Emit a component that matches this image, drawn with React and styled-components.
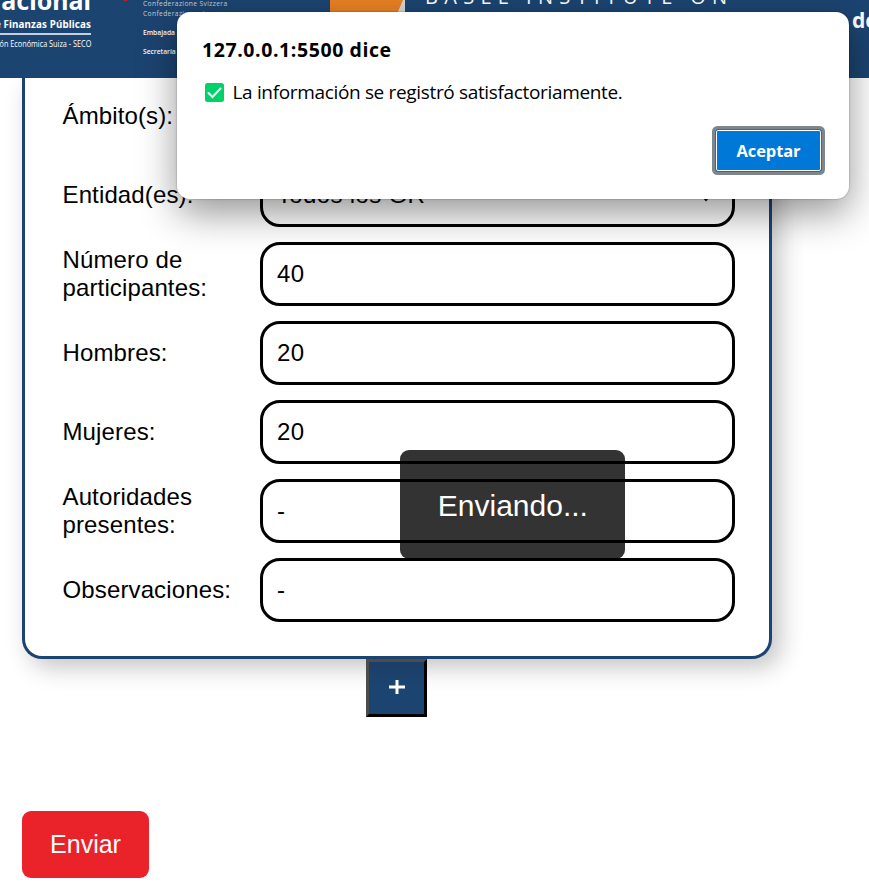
import React from "react";
import styled, { createGlobalStyle } from "styled-components";

const navy = "#1c4471";

const GlobalStyle = createGlobalStyle`
  * { box-sizing: border-box; }
  html, body { margin: 0; background: #fff; overflow: hidden; }
  body { font-family: "Liberation Sans", Arial, sans-serif; color: #000; }
`;

const Page = styled.div`
  position: relative;
  width: 869px;
  height: 891px;
  overflow: hidden;
  display: flex;
  flex-direction: column;
  align-items: flex-start;
`;

const Header = styled.header`
  position: relative;
  z-index: 1;
  flex: none;
  width: 100%;
  height: 78px;
  display: flex;
  background: ${navy};
  color: #fff;
  overflow: hidden;
  font-family: "Open Sans", "Noto Sans", sans-serif;
`;

const Brand = styled.div`
  width: 92px;
  height: 78px;
  flex: none;
  display: flex;
  flex-direction: column;
  align-items: flex-end;
  padding-right: 1px;
  white-space: nowrap;
`;

const BrandName = styled.div`
  font: 700 25px/30px "Noto Sans", sans-serif;
  margin-top: -15px;
`;

const BrandArea = styled.div`
  font: 700 9.8px/14px "Noto Sans", sans-serif;
  letter-spacing: 0.12px;
  margin-top: 3px;
`;

const BrandRule = styled.div`
  width: 92px;
  height: 2px;
  margin: 1px 0 2px;
  background: #c4d0df;
`;

const BrandOffice = styled.div`
  font: 400 9px/14px "Open Sans", sans-serif;
  transform: scaleX(0.81);
  transform-origin: right;
`;

const Flag = styled.svg`
  flex: none;
  width: 10px;
  height: 2px;
  margin-left: 29px;
`;

const Swiss = styled.div`
  flex: none;
  width: 187px;
  margin-left: 12px;
  white-space: nowrap;
`;

const SwissLine = styled.div`
  font: ${(p) => (p.$strong ? 600 : 400)} 6.7px/10px "Open Sans", sans-serif;
  letter-spacing: ${(p) => (p.$strong ? "0" : "0.36px")};
  margin-top: ${(p) => p.$gap}px;
  color: ${(p) => (p.$strong ? "#fff" : "#c3cfde")};
`;

const BaselMark = styled.svg`
  flex: none;
  width: 75px;
  height: 14px;
`;

const BaselName = styled.div`
  flex: none;
  width: 421px;
  margin: -15.5px 0 0 20px;
  font: 400 20px/24px "Open Sans", sans-serif;
  letter-spacing: 6.3px;
  white-space: nowrap;
`;

const NavText = styled.div`
  flex: none;
  margin: 7px 0 0 6px;
  font: 700 21px/27px "Noto Sans", sans-serif;
`;

const Card = styled.main`
  flex: none;
  width: 750px;
  margin-left: 22px;
  padding: 6px 34px 34px 37.5px;
  border: 3px solid ${navy};
  border-top: 0;
  border-radius: 0 0 20px 20px;
  display: flex;
  flex-direction: column;
  gap: 15px;
  background: #fff;
  box-shadow: 8px 8px 24px rgba(0, 0, 0, 0.24);
`;

const Row = styled.div`
  display: grid;
  grid-template-columns: 197.5px 475px;
  align-items: center;
  height: 64px;
`;

const Label = styled.label`
  font-size: 24px;
  line-height: 28px;
  max-width: 175px;
  letter-spacing: 0.13px;
`;

const Field = styled.div`
  height: 64px;
  border: 3px solid #000;
  border-radius: 20px;
  padding: 0 18px 0 14px;
  display: flex;
  align-items: center;
  justify-content: space-between;
  font-size: 24px;
  letter-spacing: 0.35px;
  background: #fff;
`;

const AddButton = styled.button`
  flex: none;
  width: 61px;
  height: 58px;
  margin-left: 366px;
  padding: 0 0 2px;
  border: 3px solid;
  border-color: #4c4c4c #000 #000 #4c4c4c;
  background: linear-gradient(#1b3e67, ${navy} 24px);
  display: grid;
  place-items: center;
`;

const SendButton = styled.button`
  flex: none;
  width: 127px;
  height: 67px;
  margin: 94px 0 0 22px;
  padding: 0;
  border: 0;
  border-radius: 9px;
  background: #ea232a;
  color: #fff;
  font: 25px "Liberation Sans", Arial, sans-serif;
`;

const Toast = styled.div`
  position: absolute;
  z-index: 2;
  left: 400.4px;
  top: 450.3px;
  width: 225px;
  height: 108.5px;
  border-radius: 9px;
  background: rgba(0, 0, 0, 0.8);
  color: #fff;
  text-align: center;
  font-size: 30px;
  line-height: 111.5px;
`;

const Dialog = styled.section`
  position: absolute;
  z-index: 3;
  left: 177px;
  top: 11.5px;
  width: 672px;
  height: 187.5px;
  padding: 25px 24px 24px 25px;
  border-radius: 13px;
  background: #fff;
  box-shadow: 0 0 1px 1px rgba(0, 0, 0, 0.12), 0 14px 38px rgba(0, 0, 0, 0.42);
  display: flex;
  flex-direction: column;
`;

const DialogTitle = styled.h1`
  margin: 0;
  font: 700 19.5px/26px "Open Sans", "Noto Sans", sans-serif;
  letter-spacing: 0.58px;
  white-space: nowrap;
`;

const Message = styled.div`
  display: flex;
  align-items: center;
  gap: 9px;
  height: 26px;
  margin-top: 16.5px;
  padding-left: 2.5px;
  font: 400 19px/26px "Open Sans", sans-serif;
  letter-spacing: -0.34px;
  white-space: nowrap;
`;

const AcceptButton = styled.button`
  width: 105px;
  height: 41px;
  margin: auto 4px 4px auto;
  padding: 0;
  border: 1px solid #fff;
  border-radius: 2px;
  outline: 1px solid #0078d7;
  box-shadow: 0 0 0 4px #7e858d;
  background: #0078d7;
  color: #fff;
  font: 700 16.5px "Open Sans", sans-serif;
  letter-spacing: -0.1px;
`;

const fields = [
  ["Ámbito(s):", ""],
  ["Entidad(es):", "Todos los GR", true],
  ["Número de participantes:", "40"],
  ["Hombres:", "20"],
  ["Mujeres:", "20"],
  ["Autoridades presentes:", "-"],
  ["Observaciones:", "-"],
];

export default function App() {
  return (
    <Page>
      <GlobalStyle />
      <Header>
        <Brand>
          <BrandName>acional</BrandName>
          <BrandArea>e Finanzas Públicas</BrandArea>
          <BrandRule />
          <BrandOffice>ón Económica Suiza - SECO</BrandOffice>
        </Brand>
        <Flag viewBox="0 0 10 2">
          <path d="M2 0h5Q5 2 2 0" fill="#e31319" />
        </Flag>
        <Swiss>
          <SwissLine $gap={-1.5}>Confederazione Svizzera</SwissLine>
          <SwissLine $gap={0}>Confederaziun svizra</SwissLine>
          <SwissLine $strong $gap={9}>Embajada de Suiza</SwissLine>
          <SwissLine $strong $gap={9}>Secretaría de Estado</SwissLine>
        </Swiss>
        <BaselMark viewBox="0 0 75 14">
          <path d="M0 0H75V14H0z" fill="#d6d8d4" />
          <path d="M0 0H73L67 14H0z" fill="#e98124" />
        </BaselMark>
        <BaselName>BASEL INSTITUTE ON</BaselName>
        <NavText>de</NavText>
      </Header>
      <Card>
        {fields.map(([label, value, select]) => (
          <Row key={label}>
            <Label>{label}</Label>
            <Field>
              <span>{value}</span>
              {select && (
                <svg width="16" height="16" viewBox="0 0 16 16">
                  <path d="m2 6 6 7 6-7" fill="none" stroke="#000" strokeWidth="2" />
                </svg>
              )}
            </Field>
          </Row>
        ))}
      </Card>
      <AddButton aria-label="Agregar">
        <svg width="16" height="16" viewBox="0 0 16 16">
          <path d="M8 1v14M0 8h16" stroke="#fff" strokeWidth="3" />
        </svg>
      </AddButton>
      <SendButton>Enviar</SendButton>
      <Toast>Enviando...</Toast>
      <Dialog>
        <DialogTitle>127.0.0.1:5500 dice</DialogTitle>
        <Message>
          <svg width="19" height="19" viewBox="0 0 19 19">
            <rect width="19" height="19" rx="2.5" fill="#00d26a" />
            <path d="m3.5 10 4 4 8-8.5" fill="none" stroke="#fff" strokeWidth="2" strokeLinecap="round" />
          </svg>
          <span>La información se registró satisfactoriamente.</span>
        </Message>
        <AcceptButton>Aceptar</AcceptButton>
      </Dialog>
    </Page>
  );
}
